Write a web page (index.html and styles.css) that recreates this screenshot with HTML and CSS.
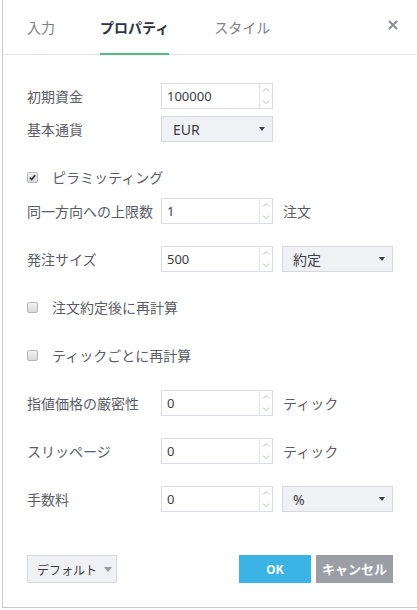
FILE: index.html
```html
<!DOCTYPE html>
<html lang="ja">
<head>
<meta charset="utf-8">
<link rel="stylesheet" href="styles.css">
</head>
<body>
<div class="dialog">
  <div class="header">
    <div class="tabs">
      <div class="tab">入力</div>
      <div class="tab active">プロパティ</div>
      <div class="tab">スタイル</div>
    </div>
    <svg class="close" width="10" height="10" viewBox="0 0 10 10"><path d="M1 1L9 9M9 1L1 9" stroke="#8d9099" stroke-width="2.2" stroke-linecap="butt"/></svg>
  </div>
  <div class="content">
    <div class="row">
      <div class="label">初期資金</div>
      <div class="spin"><span class="val">100000</span><div class="arrows"><svg class="up" viewBox="0 0 12 12"><path d="M3 7.5L6 4.5L9 7.5" fill="none" stroke="#b9bcc5" stroke-width="1"/></svg><svg class="down" viewBox="0 0 12 12"><path d="M3 4.5L6 7.5L9 4.5" fill="none" stroke="#b9bcc5" stroke-width="1"/></svg></div></div>
    </div>
    <div class="row tight7">
      <div class="label">基本通貨</div>
      <div class="select"><span>EUR</span><span class="caret"></span></div>
    </div>
    <div class="row check">
      <span class="box checked"><svg viewBox="0 0 11 11"><path d="M2.3 5.6L4.5 8L8.8 2.6" fill="none" stroke="#2e3038" stroke-width="2"/></svg></span>
      <span class="ctext">ピラミッティング</span>
    </div>
    <div class="row tight8">
      <div class="label">同一方向への上限数</div>
      <div class="spin"><span class="val">1</span><div class="arrows"><svg class="up" viewBox="0 0 12 12"><path d="M3 7.5L6 4.5L9 7.5" fill="none" stroke="#b9bcc5" stroke-width="1"/></svg><svg class="down" viewBox="0 0 12 12"><path d="M3 4.5L6 7.5L9 4.5" fill="none" stroke="#b9bcc5" stroke-width="1"/></svg></div></div>
      <div class="unit">注文</div>
    </div>
    <div class="row">
      <div class="label">発注サイズ</div>
      <div class="spin"><span class="val">500</span><div class="arrows"><svg class="up" viewBox="0 0 12 12"><path d="M3 7.5L6 4.5L9 7.5" fill="none" stroke="#b9bcc5" stroke-width="1"/></svg><svg class="down" viewBox="0 0 12 12"><path d="M3 4.5L6 7.5L9 4.5" fill="none" stroke="#b9bcc5" stroke-width="1"/></svg></div></div>
      <div class="select small"><span>約定</span><span class="caret"></span></div>
    </div>
    <div class="row check">
      <span class="box"></span>
      <span class="ctext">注文約定後に再計算</span>
    </div>
    <div class="row check">
      <span class="box"></span>
      <span class="ctext">ティックごとに再計算</span>
    </div>
    <div class="row">
      <div class="label">指値価格の厳密性</div>
      <div class="spin"><span class="val">0</span><div class="arrows"><svg class="up" viewBox="0 0 12 12"><path d="M3 7.5L6 4.5L9 7.5" fill="none" stroke="#b9bcc5" stroke-width="1"/></svg><svg class="down" viewBox="0 0 12 12"><path d="M3 4.5L6 7.5L9 4.5" fill="none" stroke="#b9bcc5" stroke-width="1"/></svg></div></div>
      <div class="unit">ティック</div>
    </div>
    <div class="row">
      <div class="label">スリッページ</div>
      <div class="spin"><span class="val">0</span><div class="arrows"><svg class="up" viewBox="0 0 12 12"><path d="M3 7.5L6 4.5L9 7.5" fill="none" stroke="#b9bcc5" stroke-width="1"/></svg><svg class="down" viewBox="0 0 12 12"><path d="M3 4.5L6 7.5L9 4.5" fill="none" stroke="#b9bcc5" stroke-width="1"/></svg></div></div>
      <div class="unit">ティック</div>
    </div>
    <div class="row">
      <div class="label">手数料</div>
      <div class="spin"><span class="val">0</span><div class="arrows"><svg class="up" viewBox="0 0 12 12"><path d="M3 7.5L6 4.5L9 7.5" fill="none" stroke="#b9bcc5" stroke-width="1"/></svg><svg class="down" viewBox="0 0 12 12"><path d="M3 4.5L6 7.5L9 4.5" fill="none" stroke="#b9bcc5" stroke-width="1"/></svg></div></div>
      <div class="select small"><span>%</span><span class="caret"></span></div>
    </div>
  </div>
  <div class="footer">
    <div class="default"><span class="dtext">デフォルト</span><span class="caret grey"></span></div>
    <div class="buttons">
      <div class="btn ok">OK</div>
      <div class="btn cancel">キャンセル</div>
    </div>
  </div>
</div>
</body>
</html>
```

FILE: styles.css
```css
html, body {
  margin: 0;
  padding: 0;
  background: #ffffff;
}
body {
  font-family: "Noto Sans CJK JP", "Noto Sans", sans-serif;
  color: #5a5d66;
  width: 417px;
  height: 610px;
  overflow: hidden;
}
.dialog {
  margin-left: 2px;
  border-left: 1px solid #c9cacd;
  border-bottom: 1px solid #c9cacd;
  height: 607px;
  background: #fff;
  display: flex;
  flex-direction: column;
}
.header {
  height: 54px;
  border-bottom: 1px solid #e0e3eb;
  display: flex;
  align-items: stretch;
  justify-content: space-between;
  padding: 0 19px 0 24px;
  flex: none;
}
.tabs {
  display: flex;
  gap: 45px;
}
.tab {
  font-size: 14px;
  line-height: 54px;
  height: 54px;
  color: #7d808b;
  box-sizing: border-box;
}
.tab.active {
  color: #2f3241;
  font-weight: bold;
  border-bottom: 2px solid #53b987;
  margin-bottom: -1px;
  height: 55px;
  line-height: 55px;
}
.close {
  width: 10px;
  height: 10px;
  margin-top: 20px;
}
.content {
  padding: 28px 0 0 24px;
  display: flex;
  flex-direction: column;
}
.row {
  display: flex;
  align-items: center;
  height: 26px;
  font-size: 14px;
}
.row + .row {
  margin-top: 22px;
}
.row.tight7 {
  margin-top: 7px;
}
.row.tight8 {
  margin-top: 8px;
}
.label {
  width: 134px;
  flex: none;
  white-space: nowrap;
}
.spin {
  width: 112px;
  height: 26px;
  box-sizing: border-box;
  border: 1px solid #dadde3;
  display: flex;
  align-items: center;
  background: #fff;
  flex: none;
}
.val {
  flex: 1;
  padding-left: 5px;
  font-size: 13px;
  color: #3a3c44;
  font-family: "Noto Sans", "Noto Sans CJK JP", sans-serif;
}
.arrows {
  width: 12px;
  height: 24px;
  border-left: 1px solid #e2e4ea;
  display: flex;
  flex-direction: column;
}
.arrows svg {
  width: 12px;
  height: 12px;
  display: block;
}
.select {
  width: 112px;
  height: 26px;
  box-sizing: border-box;
  border: 1px solid #d6d8de;
  background: #f0f1f5;
  display: flex;
  align-items: center;
  justify-content: space-between;
  padding: 0 7px 0 11px;
  font-size: 14px;
  color: #3a3c44;
  font-family: "Noto Sans", "Noto Sans CJK JP", sans-serif;
  flex: none;
}
.select.small {
  width: 111px;
  margin-left: 9px;
  padding-left: 10px;
}
.caret {
  width: 0;
  height: 0;
  border-left: 3.5px solid transparent;
  border-right: 3.5px solid transparent;
  border-top: 4px solid #3c3e46;
  flex: none;
}
.caret.grey {
  border-left-width: 4.5px;
  border-right-width: 4.5px;
  border-top: 5px solid #9a9ca4;
}
.unit {
  margin-left: 10px;
  white-space: nowrap;
}
.check {
  gap: 14px;
}
.box {
  width: 11px;
  height: 11px;
  box-sizing: border-box;
  border: 1px solid #b4b6bc;
  border-radius: 2px;
  background: linear-gradient(#f3f3f5, #d8d9dd);
  display: inline-flex;
  flex: none;
}
.box svg {
  width: 9px;
  height: 9px;
}
.ctext {
  white-space: nowrap;
  margin-top: -1px;
}
.footer {
  margin-top: 43px;
  padding: 0 24px;
  display: flex;
  justify-content: space-between;
  align-items: center;
}
.default {
  width: 90px;
  height: 28px;
  box-sizing: border-box;
  border: 1px solid #d6d8de;
  background: #f0f1f5;
  display: flex;
  align-items: center;
  gap: 7px;
  padding-left: 9px;
  font-size: 12px;
  color: #3a3c44;
  flex: none;
  white-space: nowrap;
}
.buttons {
  display: flex;
  gap: 5px;
}
.btn {
  height: 28px;
  line-height: 28px;
  text-align: center;
  color: #fff;
  font-weight: bold;
  font-size: 12px;
}
.btn.ok {
  width: 72px;
  background: #3bb3e4;
}
.btn.cancel {
  width: 77px;
  background: #9c9ea6;
  font-size: 13px;
}
```
